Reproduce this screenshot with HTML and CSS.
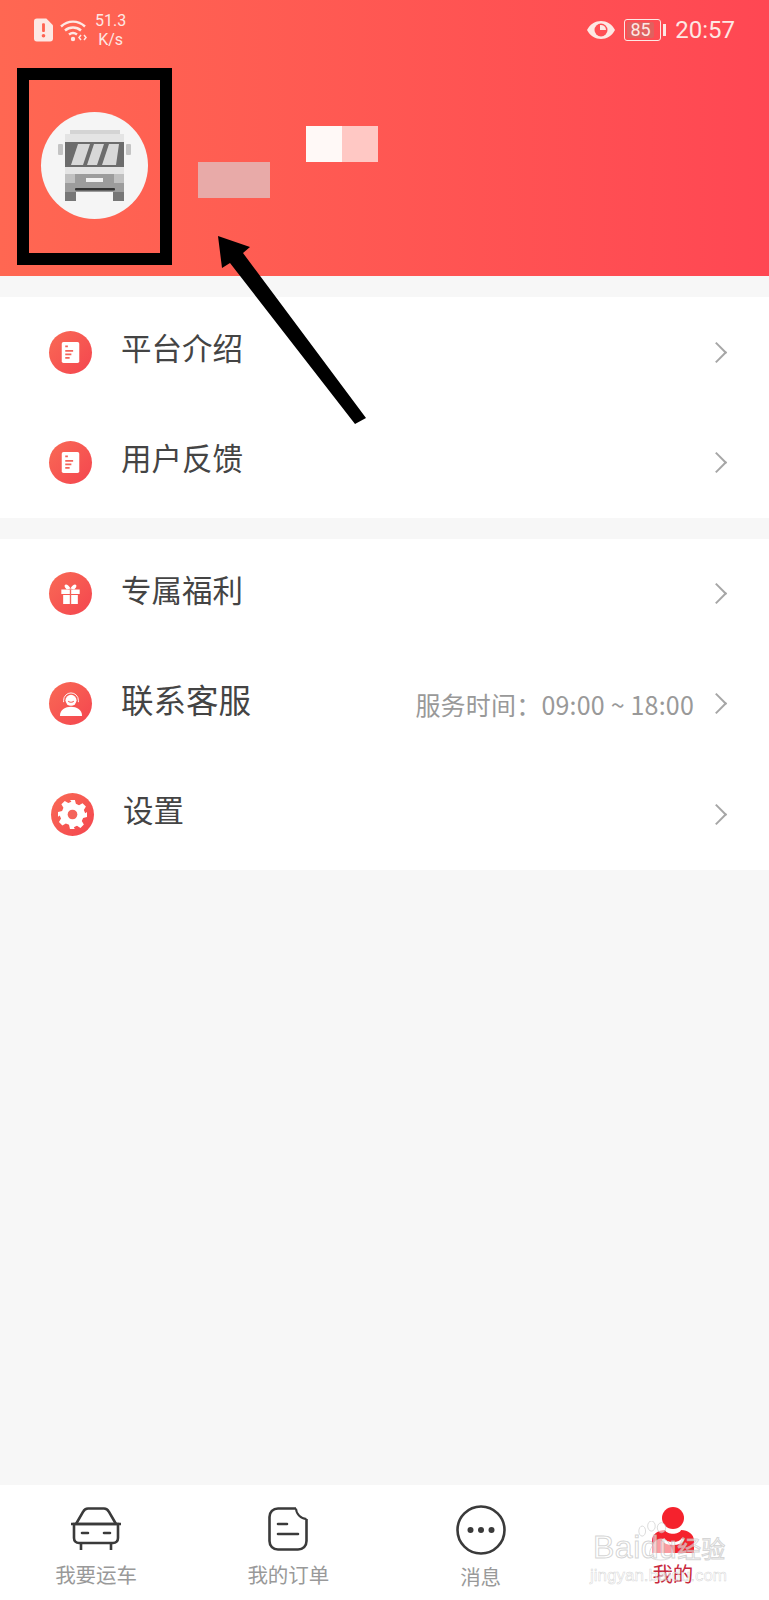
FILE: index.html
```html
<!DOCTYPE html>
<html lang="zh-CN">
<head>
  <meta charset="UTF-8">
  <meta name="viewport" content="width=device-width, initial-scale=1.0">
  <title>我的</title>
  <link rel="stylesheet" href="styles.css">
</head>
<body>
  <main class="page">
    <header class="hero">
      <div class="status">
        <div class="status-left">
          <svg class="sim" viewBox="0 0 20 24"><path d="M3 0h10l7 7v14a3 3 0 0 1-3 3H3a3 3 0 0 1-3-3V3a3 3 0 0 1 3-3z" fill="#fde8e4"/><rect x="8.5" y="5" width="3" height="9" rx="1" fill="#ff6352"/><circle cx="10" cy="18" r="1.9" fill="#ff6352"/></svg>
          <svg class="wifi" viewBox="0 0 28 24" fill="none" stroke="#fde8e4" stroke-width="2.4"><path d="M1 8.5c7-6.500 17-6.500 24 0"/><path d="M5 12.500c4.500-4 11.500-4 16 0"/><path d="M9 16.500c2.500-2 5.500-2 8 0"/><circle cx="13" cy="21" r="2.200" fill="#fde8e4" stroke="none"/><path d="M21 17l-2 2.500 2 2.500M24 17l2 2.500-2 2.500" stroke-width="1.500"/></svg>
          <div class="speed"><span>51.3</span><span>K/s</span></div>
        </div>
        <div class="status-right">
          <svg class="eye" viewBox="0 0 28 18"><path d="M0 9c6-12 22-12 28 0-6 12-22 12-28 0z" fill="#fde8e4"/><circle cx="14" cy="9" r="6.500" fill="#ff4f55"/><path d="M13 4a5 5 0 0 1 6 5h-6z" fill="#fde8e4"/></svg>
          <div class="battery"><span class="battery-level">85</span></div>
          <span class="battery-nub"></span>
          <span class="clock">20:57</span>
        </div>
      </div>
      <div class="profile">
        <div class="avatar">
          <svg viewBox="0 0 73 71" class="bus">
            <rect x="12" y="0" width="50" height="6" fill="#d4d4d4"/>
            <rect x="7" y="4" width="59" height="42" fill="#e4e4e4"/>
            <rect x="0" y="14" width="5" height="11" rx="1" fill="#c4c4c4"/>
            <rect x="68" y="14" width="5" height="11" rx="1" fill="#c4c4c4"/>
            <rect x="7" y="12" width="59" height="25" fill="#6c6c6c"/>
            <path d="M13 35l7-21h12l-7 21zM29 35l7-21h10l-7 21zM44 35l7-21h10l-3 21z" fill="#d8d8d8"/>
            <path d="M7 44h59v18H7z" fill="#9c9c9c"/>
            <rect x="7" y="44" width="10" height="9" fill="#c0c0c0"/>
            <rect x="56" y="44" width="10" height="9" fill="#c0c0c0"/>
            <rect x="28" y="48" width="17" height="4" fill="#f2f2f2"/>
            <rect x="17" y="58" width="40" height="2.500" rx="1" fill="#333"/>
            <rect x="7" y="62" width="11" height="9" fill="#777"/>
            <rect x="55" y="62" width="11" height="9" fill="#777"/>
          </svg>
        </div>
        <div class="blur blur-low"></div>
        <div class="blur blur-high"><span></span><span></span></div>
      </div>
    </header>

    <section class="group">
      <a class="row">
        <span class="badge"><svg viewBox="0 0 20 24"><rect width="20" height="24" rx="2" fill="#fff"/><path d="M4 5h3M4 10h9M4 14h7M4 18h5" stroke="#f4635a" stroke-width="2"/></svg></span>
        <span class="row-title">平台介绍</span>
        <span class="chevron"></span>
      </a>
      <a class="row">
        <span class="badge"><svg viewBox="0 0 20 24"><rect width="20" height="24" rx="2" fill="#fff"/><path d="M4 5h3M4 10h9M4 14h7M4 18h5" stroke="#f4635a" stroke-width="2"/></svg></span>
        <span class="row-title">用户反馈</span>
        <span class="chevron"></span>
      </a>
    </section>

    <section class="group">
      <a class="row">
        <span class="badge badge-gift"><svg viewBox="0 0 24 24"><path d="M2 7h20v5H2zM4 13h16v10H4z" fill="#fff"/><path d="M12 6C9 0 4 1 6 5l2 2zM12 6c3-6 8-5 6-1l-2 2z" fill="#fff"/><path d="M12 7v16" stroke="#f4635a" stroke-width="1.500"/></svg></span>
        <span class="row-title">专属福利</span>
        <span class="chevron"></span>
      </a>
      <a class="row">
        <span class="badge badge-support"><svg viewBox="0 0 26 26"><circle cx="13" cy="9" r="6" fill="#fff"/><path d="M13 1a8 8 0 0 0-8 8v2M13 1a8 8 0 0 1 8 8v2" fill="none" stroke="#fff" stroke-width="1"/><path d="M1 26c0-7 6-10 12-10s12 3 12 10z" fill="#fff"/><path d="M10 10c1.500 1.500 4.500 1.500 6 0" fill="none" stroke="#f4635a" stroke-width="1.200"/></svg></span>
        <span class="row-title row-title-wide">联系客服</span>
        <span class="row-note">服务时间：09:00 ~ 18:00</span>
        <span class="chevron"></span>
      </a>
      <a class="row row-shifted">
        <span class="badge badge-gear"><svg viewBox="0 0 24 24"><path d="M10 0h4l.8 3.200 2.600 1.100 2.900-1.700 2.800 2.800-1.700 2.900 1.100 2.600L24 10v4l-3.200.8-1.100 2.600 1.700 2.900-2.800 2.800-2.900-1.700-2.600 1.100L13.900 24h-4l-.8-3.500-2.600-1.100-2.900 1.700-2.800-2.800 1.700-2.900-1.100-2.600L0 13.900v-4l3.400-.8 1.100-2.600-1.700-2.900 2.800-2.800 2.900 1.700 2.600-1.100z" fill="#fff"/><circle cx="12" cy="12" r="4" fill="#f4635a"/></svg></span>
        <span class="row-title">设置</span>
        <span class="chevron"></span>
      </a>
    </section>

    <div class="spacer"></div>

    <nav class="tabs">
      <a class="tab">
        <svg class="tab-icon" viewBox="0 0 50 44" fill="none" stroke="#3a3a3a" stroke-width="2.600"><path d="M0 17h50"/><path d="M5 17l7-12c1-2 3-3.500 5-3.500h16c2 0 4 1.500 5 3.500l7 12"/><path d="M3 17h44v14c0 3-2 5-5 5H8c-3 0-5-2-5-5z"/><path d="M10 36v7M40 36v7"/><path d="M11 26h6M33 26h6" stroke-linecap="round"/></svg>
        <span>我要运车</span>
      </a>
      <a class="tab">
        <svg class="tab-icon" viewBox="0 0 40 44" fill="none" stroke="#3a3a3a" stroke-width="2.600"><path d="M28 1.500H10c-5 0-8.500 3.500-8.500 8.500v24c0 5 3.500 8.500 8.500 8.500h20c5 0 8.500-3.500 8.500-8.500V12"/><path d="M28 1.500a11 11 0 0 0 10.500 10.500" stroke-width="2"/><path d="M10 17h9M10 27h20" stroke-linecap="round"/></svg>
        <span>我的订单</span>
      </a>
      <a class="tab">
        <svg class="tab-icon tab-icon-lg" viewBox="0 0 50 50"><circle cx="25" cy="25" r="23.500" fill="none" stroke="#3a3a3a" stroke-width="2.600"/><circle cx="14.500" cy="25" r="3" fill="#3a3a3a"/><circle cx="25" cy="25" r="3" fill="#3a3a3a"/><circle cx="35.500" cy="25" r="3" fill="#3a3a3a"/></svg>
        <span>消息</span>
      </a>
      <a class="tab tab-active">
        <svg class="tab-icon tab-icon-user" viewBox="0 0 46 46"><circle cx="23" cy="11" r="11" fill="#f5222d"/><path d="M2 46V34c0-7 6-11 13-11 2 5 14 5 16 0 7 0 13 4 13 11v12z" fill="#f5222d"/><path d="M13 32c3 6 17 6 20 0" fill="none" stroke="#fff" stroke-width="3"/></svg>
        <span>我的</span>
      </a>
    </nav>
  </main>

  <!-- annotations drawn on top of the screenshot -->
  <div class="mark-box"></div>
  <svg class="mark-arrow" viewBox="0 0 150 190"><path d="M0 0L32 11 25 17 148 182 137 188 12 27 4 32z" fill="#000"/></svg>
  <div class="watermark">
    <svg class="wm-paw" viewBox="0 0 50 50"><ellipse cx="5" cy="12" rx="4" ry="6"/><ellipse cx="16" cy="6" rx="4.500" ry="6"/><ellipse cx="28" cy="8" rx="5" ry="6"/><path d="M18 28c4-9 15-9 20 0 4 7 5 14-2 17-5 2-13 2-18 0-7-3-4-11 0-17z"/></svg>
    <div class="wm-logo">Baidu<span class="wm-cn">经验</span></div>
    <div class="wm-url">jingyan.baidu.com</div>
  </div>
</body>
</html>
```

FILE: styles.css
```css
* { box-sizing: border-box; }

html, body {
  margin: 0;
  padding: 0;
  background: #f7f7f7;
}

body {
  font-family: "Noto Sans CJK SC", "Noto Sans", sans-serif;
  position: relative;
  height: 1600px;
  overflow: hidden;
}

.page {
  display: flex;
  flex-direction: column;
  height: 1600px;
}

/* Header */

.hero {
  height: 276px;
  background: linear-gradient(90deg, #ff6752, #ff4753);
  color: #fde8e4;
}

.status {
  display: flex;
  justify-content: space-between;
  align-items: center;
  height: 60px;
  padding: 0 34px;
}

.status-left,
.status-right {
  display: flex;
  align-items: center;
}

.sim { width: 19px; height: 24px; }
.wifi { width: 28px; height: 24px; margin-left: 7px; }

.speed {
  display: flex;
  flex-direction: column;
  align-items: center;
  margin-left: 7px;
  font: 16px/19px "Roboto", sans-serif;
}

.eye { width: 28px; height: 18px; }

.battery {
  width: 37px;
  height: 22px;
  margin-left: 9px;
  padding: 2px;
  border: 1.500px solid #fde8e4;
  border-radius: 3px;
}

.battery-level {
  display: block;
  width: 86%;
  height: 100%;
  background: #e0615f;
  border-radius: 2px;
  font: 18px/16px "Roboto", sans-serif;
  text-align: center;
}

.battery-nub {
  width: 3px;
  height: 12px;
  margin-left: 2px;
  background: #fde8e4;
}

.clock {
  margin-left: 9px;
  font: 24px/30px "Roboto", sans-serif;
}

.profile {
  display: flex;
  align-items: flex-start;
  padding: 52px 0 0 41px;
}

.avatar {
  display: flex;
  align-items: center;
  justify-content: center;
  width: 107px;
  height: 107px;
  border-radius: 50%;
  background: #f5f5f5;
}

.bus { width: 73px; height: 71px; }

.blur {
  width: 72px;
  height: 36px;
}

.blur-low {
  margin: 50px 0 0 50px;
  background: #e8aaa8;
}

.blur-high {
  display: flex;
  margin: 14px 0 0 36px;
}

.blur-high span { flex: 1; background: #fff9f7; }
.blur-high span + span { background: #ffc8c4; }

/* Menu groups */

.group {
  margin-top: 21px;
  background: #fff;
}

.row {
  display: flex;
  align-items: center;
  height: 110px;
  padding: 0 17px 0 49px;
  color: #444;
}

.row + .row { height: 110.500px; }

.row-shifted { padding-left: 51px; }

.badge {
  display: flex;
  align-items: center;
  justify-content: center;
  flex: none;
  width: 43px;
  height: 43px;
  border-radius: 50%;
  background: linear-gradient(135deg, #f96a55, #f4454f);
}

.badge svg { width: 19px; height: 21px; }
.badge-gift svg { width: 23px; height: 22px; }
.badge-support svg { width: 24px; height: 24px; }
.badge-gear svg { width: 29px; height: 29px; }

.row-title {
  margin-left: 29px;
  font-size: 30.500px;
  line-height: 40px;
  position: relative;
  top: -5px;
}

.row-title-wide { font-size: 32.500px; }

.row-note {
  margin-left: auto;
  color: #999;
  font-size: 25px;
  line-height: 32px;
  letter-spacing: 0.200px;
  white-space: nowrap;
}

.row-note + .chevron { margin-left: 15px; }

.chevron {
  flex: none;
  width: 15px;
  height: 15px;
  margin-left: auto;
  margin-right: 28px;
  border-top: 2px solid #a6a6a6;
  border-right: 2px solid #a6a6a6;
  transform: rotate(45deg);
}

.spacer { flex: 1; }

/* Bottom tabs */

.tabs {
  display: grid;
  grid-template-columns: repeat(4, 1fr);
  height: 115px;
  padding-top: 22px;
  background: #fff;
}

.tab {
  display: flex;
  flex-direction: column;
  align-items: center;
  color: #999;
  font-size: 20.500px;
  line-height: 28px;
}

.tab-icon { width: 50px; height: 44px; margin-bottom: 9px; }
.tab-icon-lg { height: 50px; margin: -2px 0 7px; }
.tab-icon-user { width: 46px; height: 46px; margin-bottom: 6px; }
.tab-active { color: #c8283c; }

/* Annotations */

.mark-box {
  position: absolute;
  left: 17px;
  top: 68px;
  width: 155px;
  height: 197px;
  border: 12px solid #000;
}

.mark-arrow {
  position: absolute;
  left: 218px;
  top: 236px;
  width: 150px;
  height: 190px;
}

.watermark {
  position: absolute;
  left: 590px;
  top: 1530px;
  width: 145px;
  color: rgba(255, 255, 255, 0.55);
  font-family: "Liberation Sans", sans-serif;
  -webkit-text-stroke: 1px rgba(190, 190, 190, 0.65);
}

.wm-paw {
  position: absolute;
  left: 48px;
  top: -9px;
  width: 42px;
  height: 42px;
  fill: rgba(255, 255, 255, 0.55);
  stroke: rgba(190, 190, 190, 0.65);
}

.wm-logo {
  position: relative;
  margin-left: 3px;
  font-size: 32px;
  line-height: 34px;
  letter-spacing: 0.500px;
  white-space: nowrap;
}

.wm-cn {
  font-family: "Noto Sans CJK SC", sans-serif;
  font-size: 24px;
  letter-spacing: 0;
}

.wm-url {
  position: relative;
  font-size: 17px;
  line-height: 22px;
  -webkit-text-stroke-width: 0.500px;
}
```
